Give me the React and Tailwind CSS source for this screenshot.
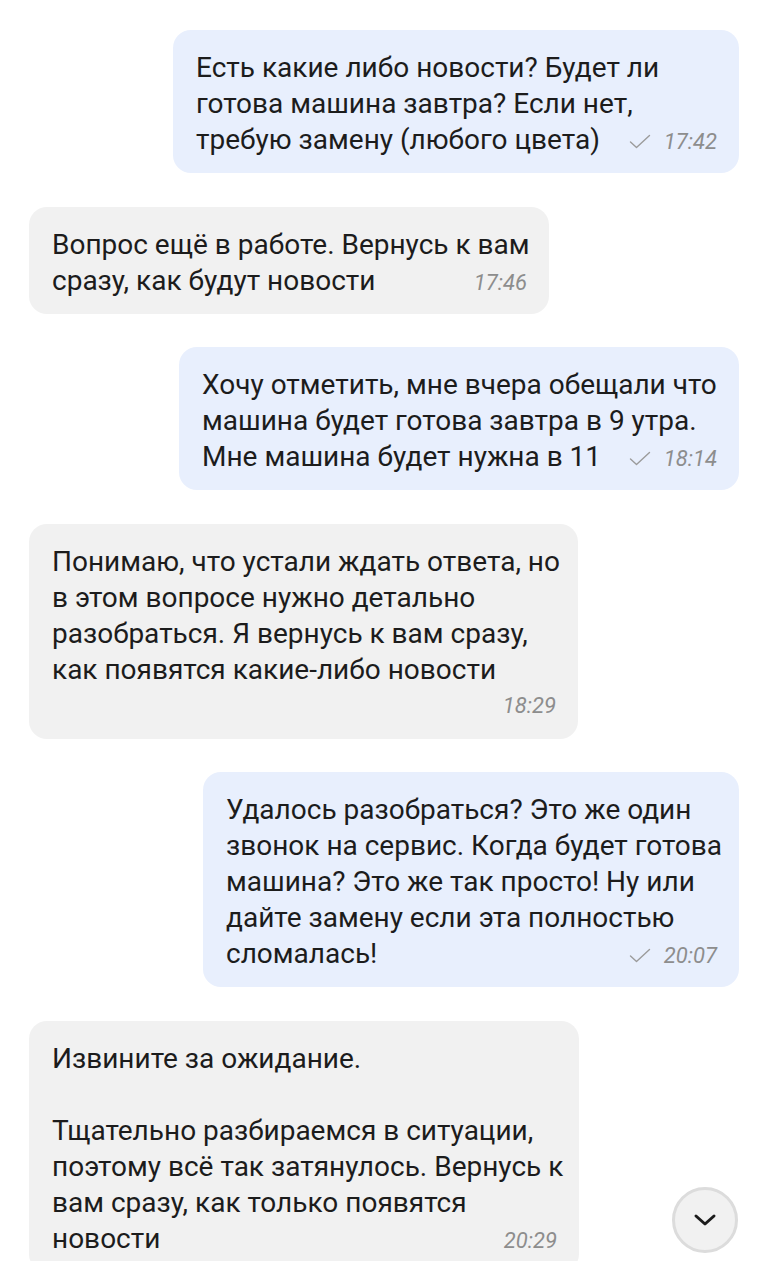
const messages = [
  {
    out: true,
    width: 'w-[566px]',
    lines: ['Есть какие либо новости? Будет ли', 'готова машина завтра? Если нет,', 'требую замену (любого цвета)'],
    time: '17:42',
  },
  {
    out: false,
    width: 'w-[520px]',
    lines: ['Вопрос ещё в работе. Вернусь к вам', 'сразу, как будут новости'],
    time: '17:46',
  },
  {
    out: true,
    width: 'w-[560px]',
    lines: ['Хочу отметить, мне вчера обещали что', 'машина будет готова завтра в 9 утра.', 'Мне машина будет нужна в 11'],
    time: '18:14',
  },
  {
    out: false,
    width: 'w-[549px]',
    lines: ['Понимаю, что устали ждать ответа, но', 'в этом вопросе нужно детально', 'разобраться. Я вернусь к вам сразу,', 'как появятся какие-либо новости'],
    time: '18:29',
    timeOwnLine: true,
  },
  {
    out: true,
    width: 'w-[536px]',
    lines: ['Удалось разобраться? Это же один', 'звонок на сервис. Когда будет готова', 'машина? Это же так просто! Ну или', 'дайте замену если эта полностью', 'сломалась!'],
    time: '20:07',
  },
  {
    out: false,
    width: 'w-[550px]',
    lines: ['Извините за ожидание.', '', 'Тщательно разбираемся в ситуации,', 'поэтому всё так затянулось. Вернусь к', 'вам сразу, как только появятся', 'новости'],
    time: '20:29',
  },
]

function Check() {
  return (
    <svg width="22" height="15" viewBox="0 0 22 15" fill="none" className="mr-[13px]">
      <path d="M1.5 8 L7.5 13.5 L20.5 1.5" stroke="#9b9b9b" strokeWidth="1.4" strokeLinecap="round" strokeLinejoin="round" />
    </svg>
  )
}

function Time({ m }) {
  return (
    <span className="flex items-center shrink-0 text-[22px] leading-[22px] italic text-[#8d8d8d]">
      {m.out && <Check />}
      {m.time}
    </span>
  )
}

function Bubble({ m }) {
  const last = m.lines.length - 1
  return (
    <div
      className={`${m.width} rounded-[18px] pl-[23px] pr-[22px] pt-5 pb-[15px] ${m.out ? 'self-end bg-[#e8effd]' : 'self-start bg-[#f1f1f1]'}`}
    >
      {m.lines.map((line, i) =>
        i === last && !m.timeOwnLine ? (
          <div key={i} className="h-[36px] flex items-baseline justify-between gap-4">
            <span>{line}</span>
            <Time m={m} />
          </div>
        ) : (
          <div key={i} className="h-[36px]">{line || '\u00a0'}</div>
        )
      )}
      {m.timeOwnLine && (
        <div className="h-[36px] flex items-center justify-end">
          <Time m={m} />
        </div>
      )}
    </div>
  )
}

export default function App() {
  return (
    <div className="relative w-[768px] h-[1261px] overflow-hidden bg-white" style={{ fontFamily: 'Roboto, "Noto Sans", sans-serif' }}>
      <div className="flex flex-col gap-[33.5px] px-[29px] pt-[30px] text-[28px] leading-[36px] text-[#1c1c1c] whitespace-nowrap">
        {messages.map((m, i) => (
          <Bubble key={i} m={m} />
        ))}
      </div>
      <button className="absolute left-[672px] top-[1187px] w-[66px] h-[66px] rounded-full bg-[#f1f1f1] border-[3px] border-[#dcdcdc] flex items-center justify-center">
        <svg width="24" height="14" viewBox="0 0 24 14" fill="none">
          <path d="M3 3 L12 11 L21 3" stroke="#1c1c1c" strokeWidth="3" strokeLinecap="round" strokeLinejoin="round" />
        </svg>
      </button>
    </div>
  )
}
